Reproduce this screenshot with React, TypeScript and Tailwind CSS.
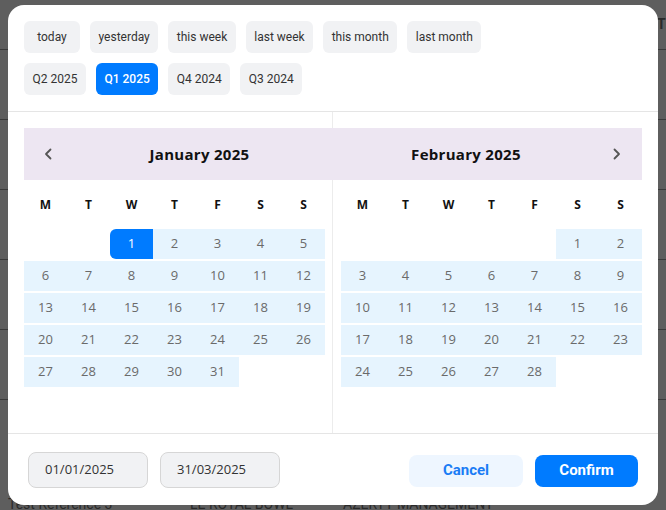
import React from "react";

const sans = { fontFamily: '"Open Sans", "Noto Sans", sans-serif' };
const roboto = { fontFamily: 'Roboto, "Noto Sans", sans-serif' };

function Chevron({ dir }: { dir: "left" | "right" }) {
  return (
    <svg width="16" height="16" viewBox="0 0 16 16" fill="none">
      {dir === "left" ? (
        <path d="M10.5 3.5 L6 8 L10.5 12.5" stroke="#555" strokeWidth="1.8" strokeLinecap="round" strokeLinejoin="round" />
      ) : (
        <path d="M5.5 3.5 L10 8 L5.5 12.5" stroke="#555" strokeWidth="1.8" strokeLinecap="round" strokeLinejoin="round" />
      )}
    </svg>
  );
}

function build(offset: number, days: number) {
  const cells: (number | null)[] = [];
  for (let i = 0; i < offset; i++) cells.push(null);
  for (let d = 1; d <= days; d++) cells.push(d);
  return cells;
}

function Month({ cells, selectedStart }: { cells: (number | null)[]; selectedStart?: number }) {
  const wd = ["M", "T", "W", "T", "F", "S", "S"];
  return (
    <div className="w-[301px]" style={sans}>
      <div className="grid grid-cols-7 h-[49px] items-center">
        {wd.map((w, i) => (
          <div key={i} className="text-center text-[12px] font-bold text-[#111]">
            {w}
          </div>
        ))}
      </div>
      <div className="grid grid-cols-7 gap-y-[2px]">
        {cells.map((c, i) =>
          c === null ? (
            <div key={i} className="h-[30px]" />
          ) : c === selectedStart ? (
            <div key={i} className="h-[30px] flex items-center justify-center bg-[#007bff] text-white text-[13px] rounded-l-md">
              {c}
            </div>
          ) : (
            <div key={i} className="h-[30px] flex items-center justify-center bg-[#e6f4fe] text-[#6a6a6a] text-[13px]">
              {c}
            </div>
          )
        )}
      </div>
    </div>
  );
}

export default function App() {
  const row1 = ["today", "yesterday", "this week", "last week", "this month", "last month"];
  const row2 = ["Q2 2025", "Q1 2025", "Q4 2024", "Q3 2024"];
  return (
    <div className="relative w-[666px] h-[510px] overflow-hidden bg-[#5e5e5e]">
      {/* background table */}
      <div className="flex flex-col" style={roboto}>
        <div className="h-[50px] border-b border-[#3a3a3a] flex items-center pl-[657px]">
          <span className="text-[14px] font-bold text-[#2a2a2a] whitespace-nowrap">TI</span>
        </div>
        {[0, 1, 2, 3, 4].map((i) => (
          <div key={i} className="h-[70px] border-b border-[#3a3a3a]" />
        ))}
        <div className="h-[69px]" />
        <div className="h-[70px] flex items-center text-[14px] text-[#2a2a2a]">
          <span className="pl-[8px] w-[190px]">Test Reference 3</span>
          <span className="w-[153px]">LE ROYAL BOWL</span>
          <span>AZERTY MANAGEMENT</span>
        </div>
      </div>

      {/* modal */}
      <div className="absolute left-[8px] top-[5px] w-[650px] h-[500px] bg-white rounded-[16px] flex flex-col overflow-hidden">
        <div className="px-4 pt-4 pb-4 border-b border-[#e5e5e5] flex flex-col gap-[10px]" style={roboto}>
          <div className="flex gap-[10px]">
            {row1.map((t) => (
              <div key={t} className="h-8 px-[8.5px] min-w-[56px] flex items-center justify-center rounded-md bg-[#f1f2f4] text-[12px] text-[#333]">
                {t}
              </div>
            ))}
          </div>
          <div className="flex gap-[10px]">
            {row2.map((t) =>
              t === "Q1 2025" ? (
                <div key={t} className="h-8 px-[8.5px] min-w-[56px] flex items-center justify-center rounded-md bg-[#007bff] text-[12px] font-medium text-white">
                  {t}
                </div>
              ) : (
                <div key={t} className="h-8 px-[8.5px] min-w-[56px] flex items-center justify-center rounded-md bg-[#f1f2f4] text-[12px] text-[#333]">
                  {t}
                </div>
              )
            )}
          </div>
        </div>

        <div className="flex h-[322px] border-b border-[#e5e5e5]">
          <div className="w-[325px] pl-4 pt-4 border-r border-[#ececec]">
            <div className="h-[52px] -mr-px relative bg-[#ede6f2] flex items-center pl-4" style={sans}>
              <Chevron dir="left" />
              <div className="flex-1 text-center pl-[10px] text-[15px] font-bold text-[#111] tracking-[0.3px]">January 2025</div>
            </div>
            <Month cells={build(2, 31)} selectedStart={1} />
          </div>
          <div className="flex-1 pr-4 pt-4">
            <div className="h-[52px] bg-[#ede6f2] flex items-center pr-[17px]" style={sans}>
              <div className="flex-1 text-center pr-[10px] text-[15px] font-bold text-[#111] tracking-[0.3px]">February 2025</div>
              <Chevron dir="right" />
            </div>
            <div className="pl-2">
              <Month cells={build(5, 28)} />
            </div>
          </div>
        </div>

        <div className="flex-1 flex items-center px-5">
          <div className="flex gap-3" style={sans}>
            <div className="w-[120px] h-[36px] flex items-center pl-4 rounded-lg bg-[#f1f2f4] border border-[#d6d6d6] text-[13px] text-[#333]">
              01/01/2025
            </div>
            <div className="w-[120px] h-[36px] flex items-center pl-4 rounded-lg bg-[#f1f2f4] border border-[#d6d6d6] text-[13px] text-[#333]">
              31/03/2025
            </div>
          </div>
          <div className="flex-1" />
          <div className="flex gap-3 pt-[2px]" style={roboto}>
            <div className="w-[114px] h-[32px] flex items-center justify-center rounded-lg bg-[#eef6ff] text-[15px] font-bold text-[#1a7cf5]">
              Cancel
            </div>
            <div className="w-[103px] h-[32px] flex items-center justify-center rounded-lg bg-[#007bff] text-[15px] font-bold text-white">
              Confirm
            </div>
          </div>
        </div>
      </div>
    </div>
  );
}
